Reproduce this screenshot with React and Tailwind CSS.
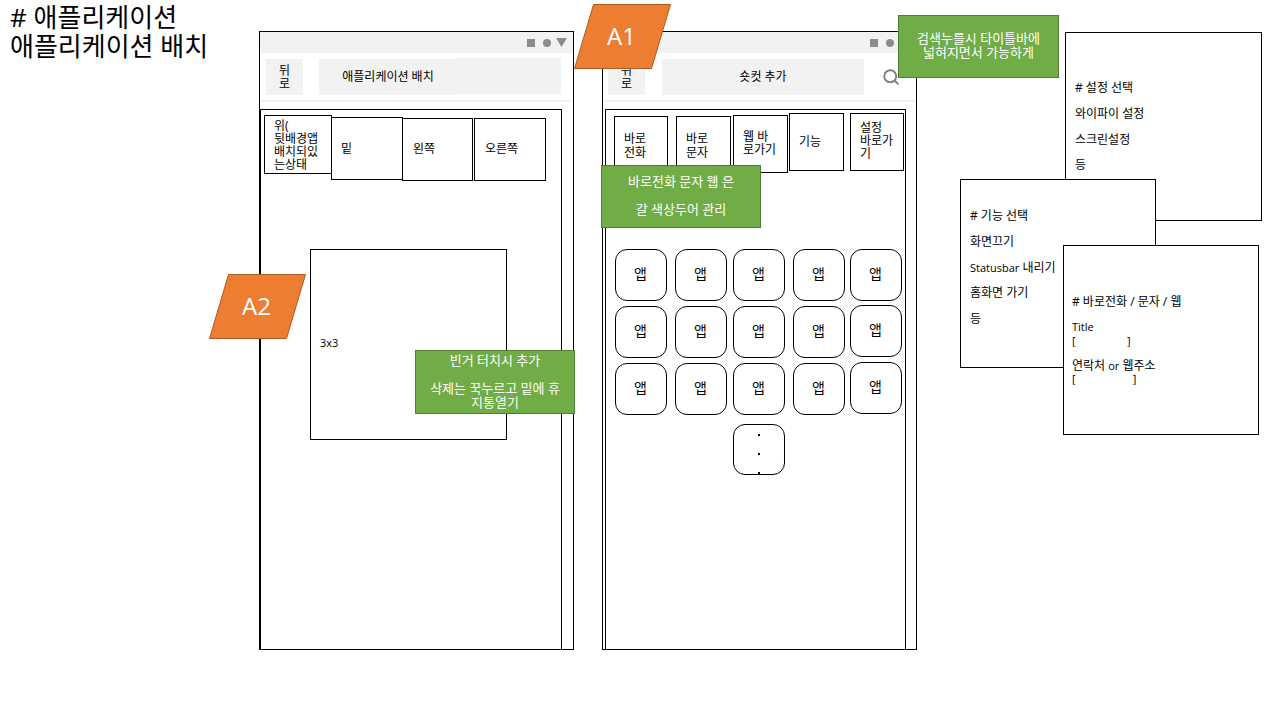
import React from 'react';
import { Search } from 'lucide-react';

const FONT = "font-['Open_Sans','Noto_Sans_CJK_KR',sans-serif]";

// 슬라이드 위의 도형들: free canvas, windows and notes keep their own place
const Box = ({ className = '', children }) => (
  <div className={`shrink-0 border border-black bg-white text-xs leading-[13px] text-black ${className}`}>{children}</div>
);

const Note = ({ className = '', children }) => (
  <div className={`absolute flex flex-col items-center border border-[#507e32] bg-[#70ad47] text-center text-[13px] leading-[14px] text-white ${className}`}>{children}</div>
);

const Tag = ({ className = '', label }) => (
  <div className={`absolute h-[65px] w-[97px] ${className}`}>
    <svg width="97" height="65" viewBox="0 0 97 65" className="absolute inset-0">
      <polygon points="19.5,0.5 96.5,0.5 77.5,64.5 0.5,64.5" fill="#ed7d31" stroke="#ae5a21" />
    </svg>
    <div className="relative flex h-full items-center justify-center pb-[2px] pr-[2px] text-2xl text-white">{label}</div>
  </div>
);

const StatusIcons = ({ triangle }) => (
  <div className="flex h-[21px] items-center justify-end bg-[#f2f2f2] pr-[6px]">
    <span className="h-2 w-2 bg-[#8c8c8c]" />
    <span className="ml-2 h-2 w-2 rounded-full bg-[#8c8c8c]" />
    <svg width="11" height="9" viewBox="0 0 11 9" className="ml-[5px]">
      {triangle && <polygon points="0,0 11,0 5.5,9" fill="#8c8c8c" />}
    </svg>
  </div>
);

const BackButton = () => (
  <div className="flex h-9 w-[37px] shrink-0 items-center justify-center bg-[#f2f2f2] px-2 text-center text-xs leading-[13px]">뒤로</div>
);

const APP_CELLS = [
  '', '', '', '', 'h-[51px]',
  '', '', '', '', '-mt-px h-[51px]',
  'h-[51px]', 'h-[51px]', 'h-[51px]', 'h-[51px]', '-mt-px',
];

export default function App() {
  return (
    <div className={`relative h-[720px] w-[1280px] overflow-hidden bg-white text-black ${FONT}`}>
      <div className="absolute left-[10px] top-[3px] text-[26px] leading-[29px]">
        # 애플리케이션<br />애플리케이션 배치
      </div>

      {/* 왼쪽 폰 */}
      <div className="absolute left-[259px] top-[31px] h-[619px] w-[315px] border border-black bg-white">
        <StatusIcons triangle />
        <div className="flex h-[49px] items-start gap-4 border-b-2 border-[#f2f2f2] pl-[6px] pt-[6px]">
          <BackButton />
          <div className="flex">
            <div className="flex h-9 w-[138px] items-center justify-center bg-[#f2f2f2] text-xs">애플리케이션 배치</div>
            <div className="-mt-px h-9 w-[104px] bg-[#f2f2f2]" />
          </div>
        </div>
      </div>
      <Box className="absolute left-[260px] top-[109px] h-[541px] w-[302px]" />
      <div className="absolute left-[264px] top-[113px] flex items-start">
        <Box className="mt-[2px] h-[59px] w-[68px] px-[9px] pt-[3px]">위(<br />뒷배경앱<br />배치되있<br />는상태</Box>
        <Box className="-ml-px mt-1 h-[63px] w-[72px] pl-[9px] pt-6">밑</Box>
        <Box className="-ml-px mt-[5px] h-[63px] w-[71px] pl-[10px] pt-[23px]">왼쪽</Box>
        <Box className="ml-px mt-[5px] h-[63px] w-[72px] pl-[10px] pt-[23px]">오른쪽</Box>
      </div>
      <Box className="absolute left-[310px] top-[249px] h-[191px] w-[197px] pl-[9px] pt-[86px]"><span className="text-[11px]">3x3</span></Box>
      <Note className="left-[415px] top-[350px] h-[64px] w-[160px] px-2 pt-[2px]">
        <div>빈거 터치시 추가</div>
        <div className="mt-[14px]">삭제는 꾹누르고 밑에 휴 지통열기</div>
      </Note>
      <Tag className="left-[209px] top-[274px]" label="A2" />

      {/* 오른쪽 폰 */}
      <div className="absolute left-[602px] top-[31px] h-[619px] w-[315px] border border-black bg-white">
        <StatusIcons />
        <div className="flex h-[49px] items-start gap-[17px] border-b-2 border-[#f2f2f2] pl-[5px] pt-[6px]">
          <BackButton />
          <div className="flex h-9 w-[202px] items-center justify-center bg-[#f2f2f2] text-xs">숏컷 추가</div>
          <Search size={18} strokeWidth={2.5} className="ml-[1px] mt-[9px] text-[#7f7f7f]" />
        </div>
      </div>
      <Box className="absolute left-[605px] top-[109px] h-[541px] w-[301px]" />
      <div className="absolute left-[614px] top-[113px] flex items-start">
        <Box className="mt-[3px] h-[60px] w-[54px] pl-[9px] pr-[12px] pt-[15px] leading-[14px]">바로전화</Box>
        <Box className="ml-2 mt-[3px] h-[60px] w-[55px] pl-[9px] pr-[12px] pt-[15px] leading-[14px]">바로문자</Box>
        <Box className="ml-[2px] mt-[2px] h-[58px] w-[55px] px-[9px] pt-[14px]">웹 바로가기</Box>
        <Box className="ml-px h-[58px] w-[55px] pl-[9px] pt-[21px]">기능</Box>
        <Box className="ml-[6px] h-[58px] w-[54px] pl-[9px] pr-[4px] pt-[7px]">설정<br />바로가기</Box>
      </div>
      <Note className="left-[601px] top-[165px] h-[63px] w-[160px] justify-center gap-[14px] pb-1">
        <div>바로전화 문자 웹 은</div>
        <div>갈 색상두어 관리</div>
      </Note>
      <Tag className="left-[574px] top-[4px]" label="A1" />
      <Note className="left-[898px] top-[15px] h-[63px] w-[161px] justify-center pb-1">검색누를시 타이틀바에<br />넓혀지면서 가능하게</Note>

      <div className="absolute left-[615px] top-[249px] grid grid-cols-[60px_58px_60px_57px_52px] auto-rows-[57px] items-start">
        {APP_CELLS.map((cell, i) => (
          <div key={i} className={`flex h-[52px] w-[52px] items-center justify-center rounded-[12px] border border-black bg-white pb-[2px] pr-px text-sm ${cell}`}>앱</div>
        ))}
        <div className="col-start-3 mt-1 flex h-[51px] w-[52px] flex-col items-center gap-[17px] rounded-[12px] border border-black bg-white pt-[9px]">
          <span className="h-[2px] w-[2px] bg-black" />
          <span className="h-[2px] w-[2px] bg-black" />
          <span className="h-[2px] w-[2px] bg-black" />
        </div>
      </div>

      {/* 선택 패널 */}
      <Box className="absolute left-[1065px] top-[32px] flex h-[189px] w-[197px] flex-col gap-[12.75px] pl-[9px] pt-12">
        <div># 설정 선택</div>
        <div>와이파이 설정</div>
        <div>스크린설정</div>
        <div>등</div>
      </Box>
      <Box className="absolute left-[960px] top-[179px] flex h-[189px] w-[196px] flex-col gap-[12.75px] pl-[9px] pt-[29px]">
        <div># 기능 선택</div>
        <div>화면끄기</div>
        <div><span className="text-[11px]">Statusbar</span> 내리기</div>
        <div>홈화면 가기</div>
        <div>등</div>
      </Box>
      <Box className="absolute left-[1063px] top-[245px] h-[190px] w-[196px] pl-[8px] pt-[49px]">
        <div># 바로전화 / 문자 / 웹</div>
        <div className="mt-3 text-[11px]">Title</div>
        <div className="mt-px whitespace-pre text-[11px]">[                  ]</div>
        <div className="mt-3">연락처 <span className="text-[11px]">or</span> 웹주소</div>
        <div className="whitespace-pre text-[11px]">[                    ]</div>
      </Box>
    </div>
  );
}
